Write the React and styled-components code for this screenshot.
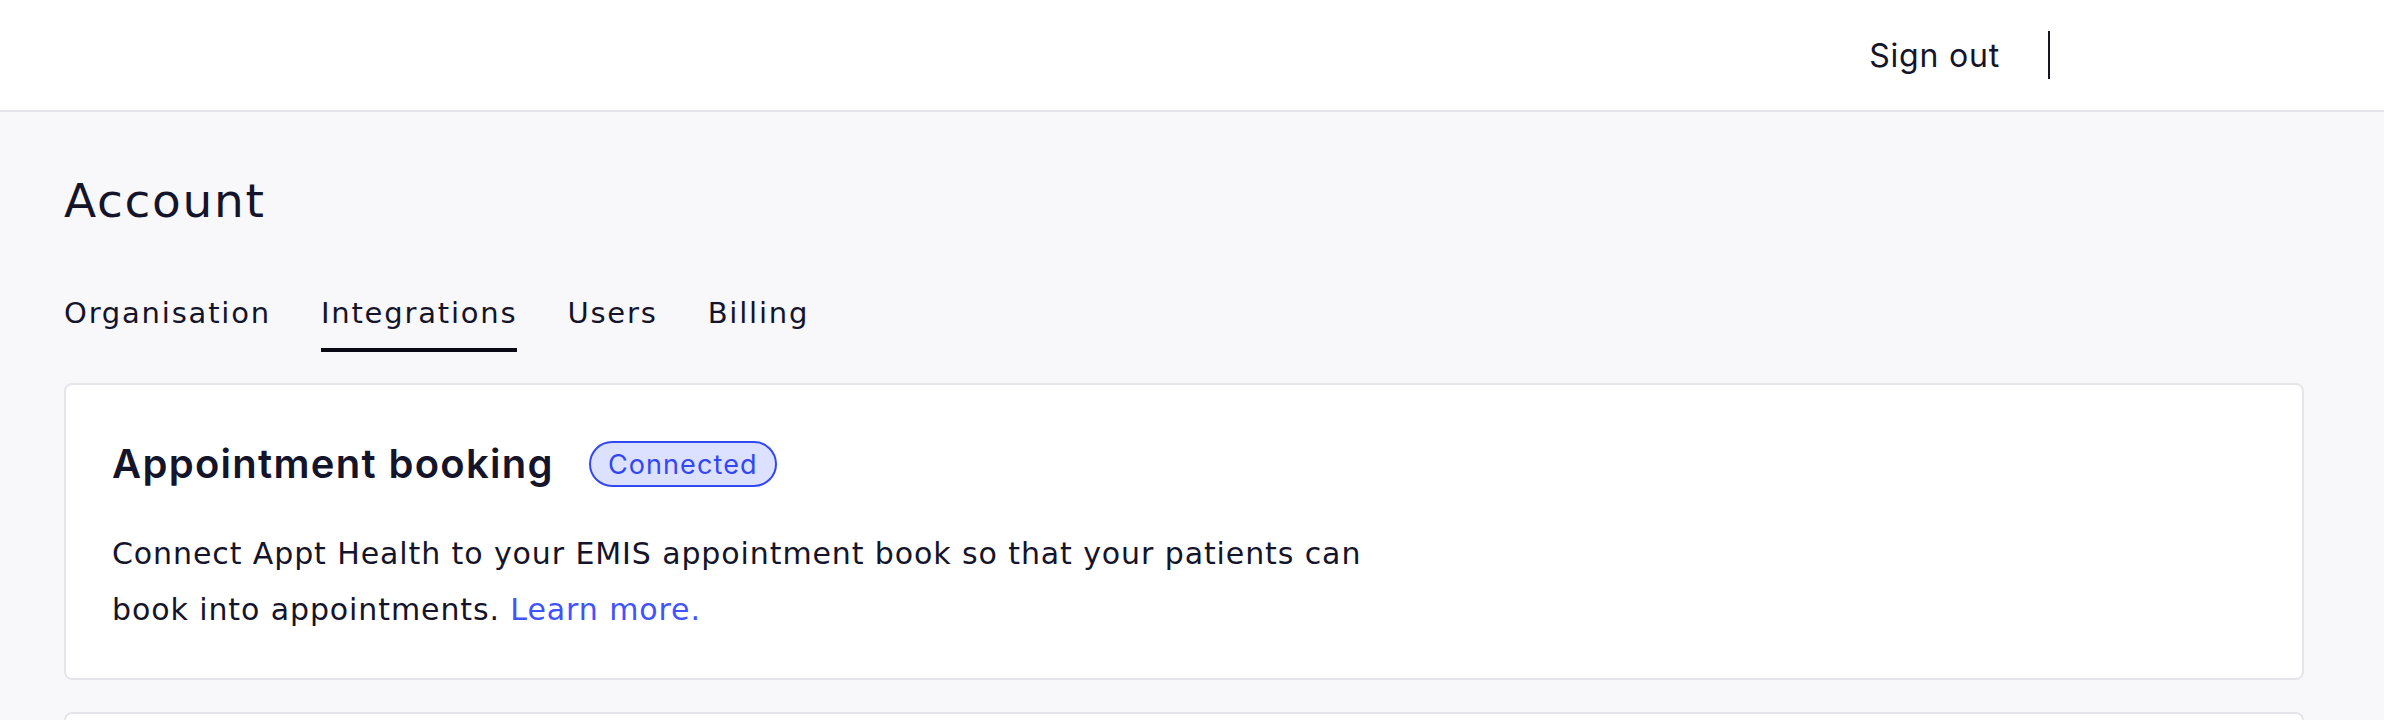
import styled, { createGlobalStyle } from "styled-components";

const GlobalStyle = createGlobalStyle`
    * {
        box-sizing: border-box;
    }
    body {
        margin: 0;
        background: #f8f8fa;
        color: #14142b;
        font-family: "DejaVu Sans", "Noto Sans", sans-serif;
    }
`

const Header = styled.header`
    display: flex;
    justify-content: flex-end;
    align-items: center;
    height: 112px;
    padding-right: 334px;
    background: #ffffff;
    border-bottom: 2px solid #e6e6ea;
`

const SignOut = styled.a`
    font-family: "Inter", "Liberation Sans", sans-serif;
    font-size: 32px;
    letter-spacing: 0.8px;
    color: #14142b;
    cursor: pointer;
`

const Divider = styled.span`
    display: block;
    width: 2px;
    height: 48px;
    margin-left: 48px;
    background: #14142b;
`

const Main = styled.main`
    padding: 61px 80px 40px 64px;
`

const Title = styled.h1`
    margin: 0;
    font-size: 47px;
    font-weight: 400;
    line-height: 56px;
    letter-spacing: 1.7px;
`

const Tabs = styled.nav`
    display: flex;
    gap: 50px;
    margin-top: 64px;
`

const Tab = styled.a`
    font-size: 29px;
    line-height: 40px;
    letter-spacing: 1.8px;
    padding-bottom: 15px;
    border-bottom: 4px solid ${props => (props.active ? "#0a0a14" : "transparent")};
    color: #14142b;
    cursor: pointer;
`

const Cards = styled.div`
    display: flex;
    flex-direction: column;
    gap: 32px;
    margin-top: 31px;
`

const Card = styled.section`
    background: #ffffff;
    border: 2px solid #e6e6ea;
    border-radius: 8px;
    padding: 56px 46px 40px;
    min-height: ${props => props.minHeight || "auto"};
`

const CardHead = styled.div`
    display: flex;
    align-items: center;
    gap: 35px;
`

const CardTitle = styled.h2`
    margin: 0;
    font-family: "Inter", "Liberation Sans", sans-serif;
    font-size: 40px;
    font-weight: 600;
    line-height: 46px;
    letter-spacing: 1.3px;
`

const Badge = styled.span`
    display: inline-flex;
    align-items: center;
    height: 46px;
    padding: 0 17px;
    border: 2px solid #3347f5;
    border-radius: 999px;
    background: #dce1ff;
    color: #3347f5;
    font-family: "Inter", "Liberation Sans", sans-serif;
    font-size: 27px;
    letter-spacing: 1.1px;
`

const Text = styled.p`
    margin: 39px 0 0;
    max-width: 1300px;
    font-size: 30px;
    line-height: 56px;
    letter-spacing: 0.9px;
`

const Link = styled.a`
    color: #4053ff;
    text-decoration: none;
    cursor: pointer;
`

export default function App() {
    const tabs = ["Organisation", "Integrations", "Users", "Billing"]

    return (
        <>
            <GlobalStyle />
            <Header>
                <SignOut>Sign out</SignOut>
                <Divider />
            </Header>
            <Main>
                <Title>Account</Title>
                <Tabs>
                    {tabs.map(t => (
                        <Tab key={t} active={t === "Integrations"}>{t}</Tab>
                    ))}
                </Tabs>
                <Cards>
                    <Card>
                        <CardHead>
                            <CardTitle>Appointment booking</CardTitle>
                            <Badge>Connected</Badge>
                        </CardHead>
                        <Text>
                            Connect Appt Health to your EMIS appointment book so that your patients can
                            book into appointments. <Link>Learn more.</Link>
                        </Text>
                    </Card>
                    <Card minHeight="240px" />
                </Cards>
            </Main>
        </>
    )
}
